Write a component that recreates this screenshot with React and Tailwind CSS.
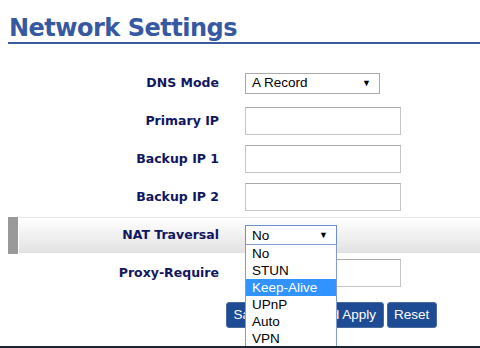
import { useState } from 'react'

const labelCls = "shrink-0 text-right text-[12.5px] font-bold text-[#111660] [font-family:'DejaVu_Sans',Verdana,sans-serif]"
const ctrlFont = "[font-family:'Liberation_Sans',Arial,sans-serif]"

function Row({ label, children }) {
  return (
    <div className="flex items-center h-[38px]">
      <div className={`w-[219px] ${labelCls}`}>{label}</div>
      <div className="ml-[26px] relative">{children}</div>
    </div>
  )
}

function TextInput() {
  return (
    <div className="w-[156px] h-[28px] border border-[#c4c4c4] border-t-[#a9a9a9] bg-white" />
  )
}

function FakeSelect({ value, width, focused }) {
  return (
    <div
      className={`h-[21px] flex items-center justify-between pl-[6px] pr-[8px] bg-white text-[13.5px] text-black ${ctrlFont} ${
        focused ? 'border border-[#6d8fd0]' : 'border border-[#a9a9a9]'
      }`}
      style={{ width }}
    >
      <span className="leading-none">{value}</span>
      <span className="text-[9px] leading-none">▼</span>
    </div>
  )
}

function Btn({ children }) {
  return (
    <button className="h-[26px] px-[6.5px] rounded-[3px] bg-[#1d4b94] border border-[#4a6a9c] text-white text-[13.5px]">
      {children}
    </button>
  )
}

export default function App() {
  const [nat] = useState('No')
  const options = ['No', 'STUN', 'Keep-Alive', 'UPnP', 'Auto', 'VPN']

  return (
    <div className="w-[480px] h-[348px] bg-white overflow-hidden relative">
      {/* Header */}
      <div className="pl-[8px] pt-[12px]">
        <h1 className="pl-[1px] pt-[2px] text-[24px] tracking-[-0.5px] leading-[28px] font-bold text-[#3659a2] border-b-2 border-[#3a5c9e] [font-family:'DejaVu_Sans',Verdana,sans-serif]">
          Network Settings
        </h1>
      </div>

      {/* Form */}
      <div className="pt-[20px]">
        <Row label="DNS Mode">
          <FakeSelect value="A Record" width={135} />
        </Row>
        <Row label="Primary IP">
          <TextInput />
        </Row>
        <Row label="Backup IP 1">
          <TextInput />
        </Row>
        <Row label="Backup IP 2">
          <TextInput />
        </Row>

        {/* highlighted row */}
        <div className="flex h-[38px] pt-[1px] pl-[8px]">
          <div className="w-[10px] bg-[#999999]" />
          <div className="flex-1 ml-[1px] flex items-center border-t border-[#e6e6e6] bg-gradient-to-b from-white to-[#e2e2e2] mb-[1px]">
            <div className={`w-[200px] ${labelCls}`}>NAT Traversal</div>
            <div className="ml-[26px] relative">
              <FakeSelect value={nat} width={92} focused />
            </div>
          </div>
        </div>

        <Row label="Proxy-Require">
          <TextInput />
        </Row>

        <div className={`flex gap-[3px] pl-[226px] pt-[10px] ${ctrlFont}`}>
          <Btn>Save</Btn>
          <Btn>Save and Apply</Btn>
          <Btn>Reset</Btn>
        </div>
      </div>

      {/* dropdown list overlay */}
      <div className={`absolute left-[245px] top-[244px] w-[92px] bg-white border border-[#7f9ccf] ${ctrlFont}`}>
        {options.map(o => (
          <div
            key={o}
            className={`h-[17px] pl-[6px] text-[13.5px] leading-[17px] ${
              o === 'Keep-Alive' ? 'bg-[#3193ff] text-white' : 'text-black'
            }`}
          >
            {o}
          </div>
        ))}
      </div>

      {/* bottom line */}
      <div className="absolute left-0 right-0 bottom-0 h-[2px] bg-[#1b2535]" />
    </div>
  )
}
